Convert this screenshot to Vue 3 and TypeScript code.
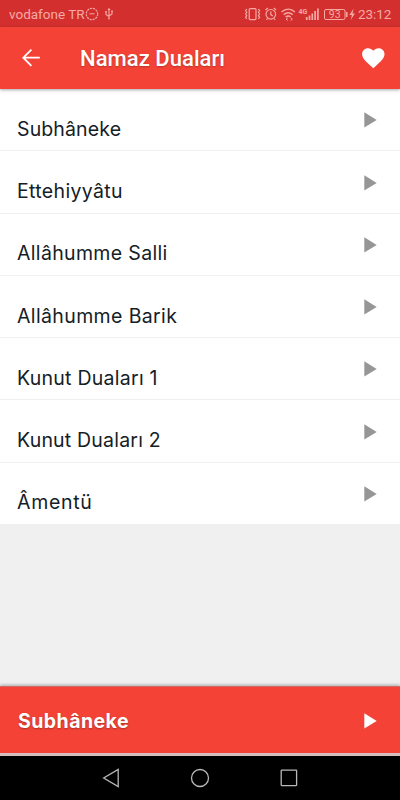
<script setup lang="ts">
interface Prayer {
  title: string
  tracking: number
}

const prayers: Prayer[] = [
  { title: 'Subhâneke', tracking: 0.13 },
  { title: 'Ettehiyyâtu', tracking: 0.35 },
  { title: 'Allâhumme Salli', tracking: 0.34 },
  { title: 'Allâhumme Barik', tracking: 0.37 },
  { title: 'Kunut Duaları 1', tracking: 0.26 },
  { title: 'Kunut Duaları 2', tracking: 0.2 },
  { title: 'Âmentü', tracking: 0.7 },
]
</script>

<template>
  <div class="screen">
    <div class="status">
      <span class="carrier">vodafone TR</span>
      <svg class="data-saver" width="14" height="14" viewBox="0 0 14 14" fill="none" stroke="currentColor">
        <circle cx="7" cy="7" r="5.700" stroke-width="1.100" stroke-dasharray="2.200 .8" />
        <path d="M4.500 6.800h5" />
      </svg>
      <svg class="usb" width="10" height="14" viewBox="0 0 10 14" fill="none" stroke="currentColor" stroke-width="1.1">
        <path d="M5 2v9M2 5v2.5l3 2M8 4.500V7L5 9" />
        <path d="M3.500 3L5 .8 6.500 3zM1.200 4h1.600v1.500H1.200zM7.200 3.500h1.600V5H7.200zM4.200 11h1.600v1.300H4.200z" fill="currentColor" stroke="none" />
      </svg>
      <svg class="status-right" width="112" height="18" viewBox="0 0 112 18" fill="none" stroke="currentColor" stroke-width="1.200">
        <rect x="5.200" y="3.600" width="6.800" height="11" rx="1" />
        <path d="M2.800 4l-1.200 1.600L2.800 7.200 1.600 9l1.200 1.700-1.200 1.600 1.200 1.600M14.400 4l1.200 1.600-1.200 1.600L15.600 9l-1.200 1.700 1.200 1.600-1.200 1.600" />
        <circle cx="26.800" cy="9.300" r="4.800" />
        <path d="M26.800 6.400v3.200l2 1.300M21.500 5l2.400-2M32.100 5l-2.400-2M23.500 13.500l-1 1.400M30.100 13.500l1 1.400" />
        <path d="M37.500 7c4.200-3.700 9.400-3.700 13.400 0M39.700 9.600c2.800-2.400 6.200-2.400 9 0M41.700 12c1.500-1.300 3.300-1.300 5 0" stroke-width="1.400" />
        <path d="M43.800 13l-1.800 1.200 1.800 1.200M46.600 13l1.800 1.200-1.800 1.200" stroke-width="1" />
        <path d="M62.700 15v-3M65.500 15v-4.500M68.300 15V8.500M71.100 15V6M73.900 15V3.500" stroke-width="1.700" />
        <rect x="80.500" y="4.500" width="20.500" height="10" rx="1.500" stroke-width="1" />
        <path d="M102.800 7v5" stroke-width="1.500" />
        <path d="M109.600 3.600l-4.200 6.400h2.500l-1.200 5 4.200-6.600h-2.400z" fill="currentColor" stroke="none" />
        <text x="54.500" y="8.500" class="net">4G</text>
        <text x="84.800" y="13.200" class="level">93</text>
      </svg>
      <span class="clock">23:12</span>
    </div>

    <header class="bar">
      <svg class="back" width="20" height="20" viewBox="0 0 20 20" fill="none" stroke="currentColor" stroke-width="1.800">
        <path d="M18.800 9.700H2.400M10.400 1.600L2.300 9.700l8.100 8.100" />
      </svg>
      <h1>Namaz Duaları</h1>
      <svg class="heart" width="24" height="22" viewBox="0 0 24 22" fill="currentColor">
        <path d="M12.300 21.300l-1.700-1.500C4.800 14.600 1.100 11.300 1.100 7.100c0-3.300 2.600-5.900 5.900-5.900 2 0 4 .9 5.300 2.500 1.300-1.600 3.300-2.500 5.300-2.500 3.300 0 5.900 2.600 5.900 5.900 0 4.200-3.700 7.500-9.500 12.700z" />
      </svg>
    </header>

    <main class="content">
      <ul class="list">
        <li v-for="p in prayers" :key="p.title" class="row">
          <span class="title" :style="{ letterSpacing: p.tracking + 'px' }">{{ p.title }}</span>
          <svg class="play" width="13" height="16" viewBox="0 0 13 16" fill="currentColor"><path d="M.3.200v15.300L12.700 7.900z" /></svg>
        </li>
      </ul>
    </main>

    <div class="player">
      <span class="now">Subhâneke</span>
      <svg width="13" height="16" viewBox="0 0 13 16" fill="currentColor"><path d="M.3.200v15.300L12.700 7.900z" /></svg>
    </div>

    <nav class="nav">
      <svg width="18" height="20" viewBox="0 0 18 20"><path d="M16.200 1.500v17L1.700 10z" /></svg>
      <svg width="20" height="20" viewBox="0 0 20 20"><circle cx="10" cy="10" r="8.500" /></svg>
      <svg width="18" height="18" viewBox="0 0 18 18"><rect x="1.200" y="1.200" width="15.400" height="15.400" rx=".5" /></svg>
    </nav>
  </div>
</template>

<style>
body {
  background: #f0f0f0;
}
</style>

<style scoped>
.screen {
  display: flex;
  flex-direction: column;
  width: 400px;
  height: 800px;
  overflow: hidden;
  background: #f0f0f0;
  font-family: Inter, sans-serif;
}
svg {
  display: block;
  flex: none;
}
.status {
  display: flex;
  align-items: center;
  flex: none;
  box-sizing: border-box;
  height: 27px;
  padding: 1px 9px 0;
  background: #d32f2f;
  color: #f6a9a3;
  font: 13.500px/26px Roboto, sans-serif;
  white-space: nowrap;
}
.carrier {
  width: 76px;
}
.usb {
  margin: 0 0 0 5px;
}
.status-right {
  margin-left: auto;
}
.net {
  font: bold 7px Roboto, sans-serif;
  fill: currentColor;
  stroke: none;
}
.level {
  font: 10.500px Roboto, sans-serif;
  fill: currentColor;
  stroke: none;
}
.clock {
  width: 33px;
  margin-left: 2px;
  font-size: 13.500px;
  letter-spacing: -0.100px;
}
.bar {
  position: relative;
  display: flex;
  align-items: center;
  flex: none;
  box-sizing: border-box;
  height: 62px;
  padding: 0 15px 0 21px;
  background: #f44336;
  color: #fff;
  box-shadow: 0 1px 3px rgba(0, 0, 0, 0.35);
}
h1 {
  margin: 0 auto 0 39px;
  padding-top: 2px;
  font: 500 22px/30px Roboto, sans-serif;
  letter-spacing: 0.050px;
  text-shadow: 0 1px 2px rgba(0, 0, 0, 0.25);
}
.content {
  flex: 1;
  min-height: 0;
}
.list {
  margin: 0;
  padding: 0;
  list-style: none;
}
.row {
  display: flex;
  justify-content: space-between;
  box-sizing: border-box;
  height: 62.250px;
  padding: 23.300px 23px 0 17px;
  border-bottom: 1px solid #f0f0f0;
  background: #fff;
}
.row:first-child {
  height: 62.400px;
}
.title {
  padding-top: 4.500px;
  color: #142026;
  font-size: 19.500px;
  line-height: 24px;
  white-space: nowrap;
}
.play {
  color: #969696;
}
.player {
  position: relative;
  display: flex;
  align-items: center;
  justify-content: space-between;
  flex: none;
  box-sizing: border-box;
  height: 70px;
  padding: 2px 23px 0 18px;
  border-top: 1px solid #cf6b66;
  border-bottom: 3px solid #d4c0c0;
  background: #f44336;
  color: #fff;
  box-shadow: 0 -1px 3px rgba(0, 0, 0, 0.3);
}
.now {
  font-size: 19.500px;
  font-weight: 700;
  letter-spacing: 0.450px;
  text-shadow: 0 1px 2px rgba(0, 0, 0, 0.3);
}
.nav {
  display: flex;
  align-items: center;
  justify-content: center;
  gap: 70px;
  flex: none;
  height: 44px;
  background: #000;
}
.nav svg {
  fill: none;
  stroke: #b8b8b8;
  stroke-width: 1.300;
}
</style>
